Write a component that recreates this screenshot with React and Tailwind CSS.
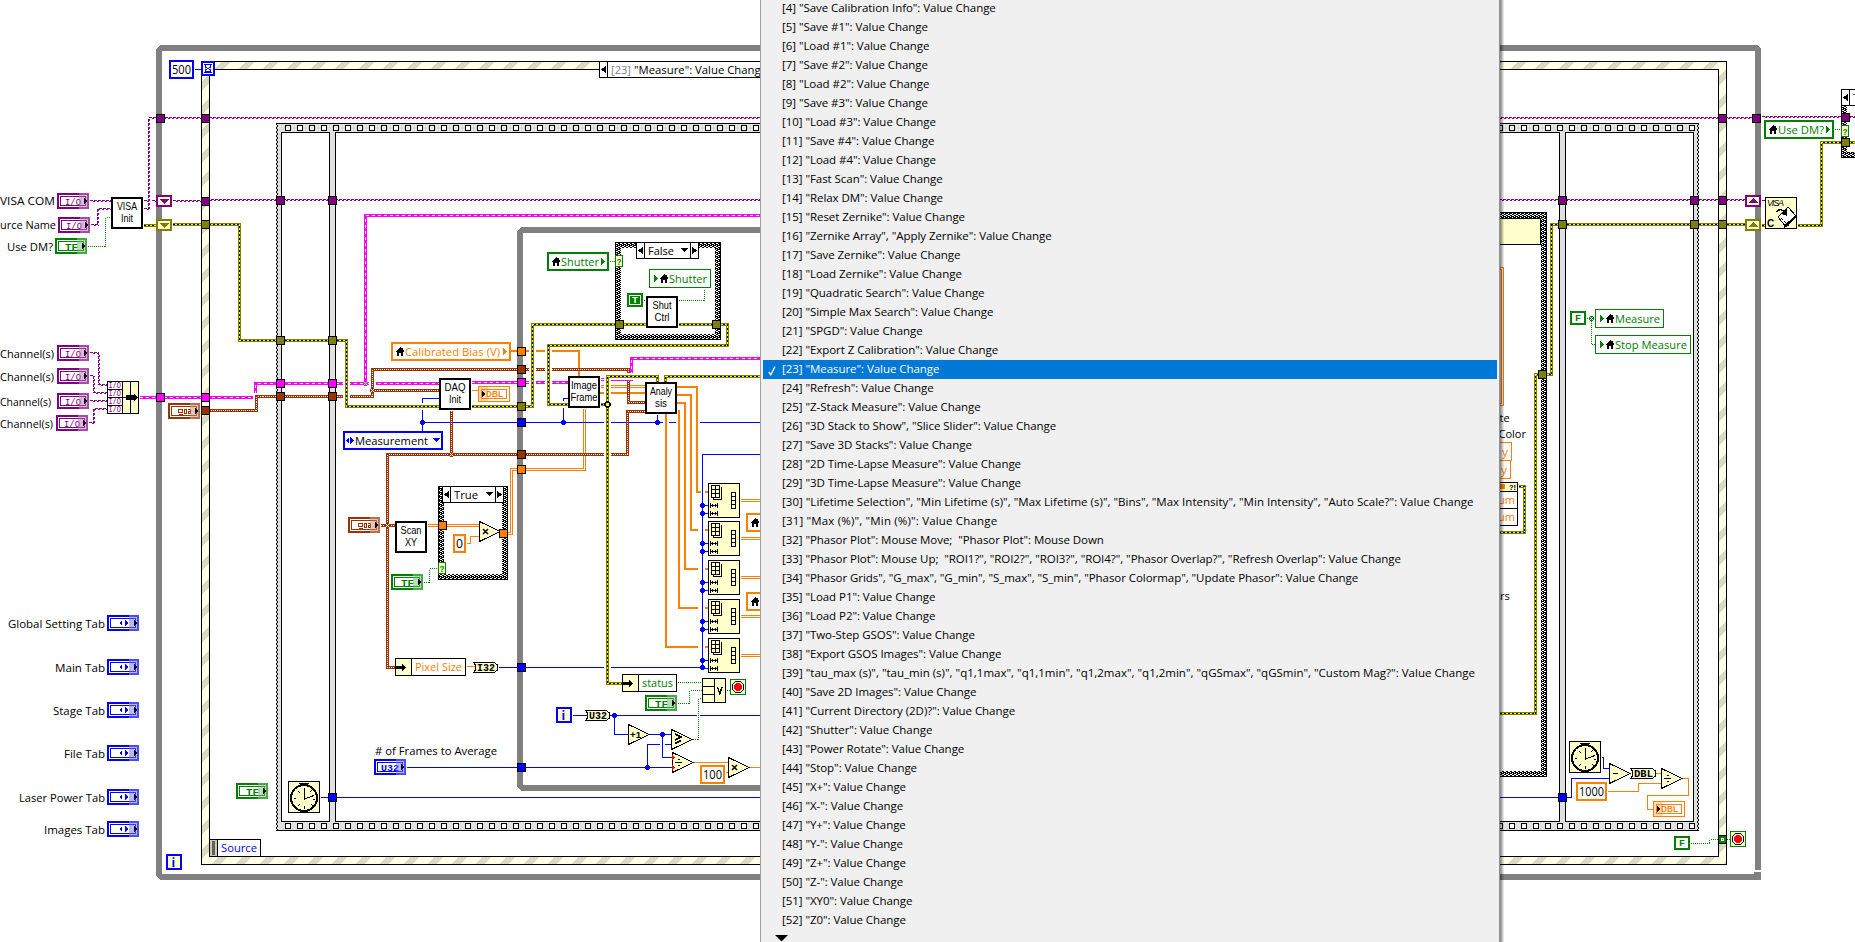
import React from "react";

const PURPLE = "#800080";
const OLIVE = "#808000";
const PINK = "#ff00ff";
const BROWN = "#993300";
const ORANGE = "#ff8000";
const BLUE = "#0000ff";
const GREEN = "#008000";
const CREAM = "#ffffcc";

const UI = "'Open Sans','Noto Sans',sans-serif";
const ICON = "'Liberation Sans',Arial,sans-serif";
const MONO = "'Liberation Mono','Courier New',monospace";

/* ---------- menu ---------- */

const events = [
  '"Save Calibration Info": Value Change',
  '"Save #1": Value Change',
  '"Load #1": Value Change',
  '"Save #2": Value Change',
  '"Load #2": Value Change',
  '"Save #3": Value Change',
  '"Load #3": Value Change',
  '"Save #4": Value Change',
  '"Load #4": Value Change',
  '"Fast Scan": Value Change',
  '"Relax DM": Value Change',
  '"Reset Zernike": Value Change',
  '"Zernike Array", "Apply Zernike": Value Change',
  '"Save Zernike": Value Change',
  '"Load Zernike": Value Change',
  '"Quadratic Search": Value Change',
  '"Simple Max Search": Value Change',
  '"SPGD": Value Change',
  '"Export Z Calibration": Value Change',
  '"Measure": Value Change',
  '"Refresh": Value Change',
  '"Z-Stack Measure": Value Change',
  '"3D Stack to Show", "Slice Slider": Value Change',
  '"Save 3D Stacks": Value Change',
  '"2D Time-Lapse Measure": Value Change',
  '"3D Time-Lapse Measure": Value Change',
  '"Lifetime Selection", "Min Lifetime (s)", "Max Lifetime (s)", "Bins", "Max Intensity", "Min Intensity", "Auto Scale?": Value Change',
  '"Max (%)", "Min (%)": Value Change',
  '"Phasor Plot": Mouse Move;  "Phasor Plot": Mouse Down',
  '"Phasor Plot": Mouse Up;  "ROI1?", "ROI2?", "ROI3?", "ROI4?", "Phasor Overlap?", "Refresh Overlap": Value Change',
  '"Phasor Grids", "G_max", "G_min", "S_max", "S_min", "Phasor Colormap", "Update Phasor": Value Change',
  '"Load P1": Value Change',
  '"Load P2": Value Change',
  '"Two-Step GSOS": Value Change',
  '"Export GSOS Images": Value Change',
  '"tau_max (s)", "tau_min (s)", "q1,1max", "q1,1min", "q1,2max", "q1,2min", "qGSmax", "qGSmin", "Custom Mag?": Value Change',
  '"Save 2D Images": Value Change',
  '"Current Directory (2D)?": Value Change',
  '"Shutter": Value Change',
  '"Power Rotate": Value Change',
  '"Stop": Value Change',
  '"X+": Value Change',
  '"X-": Value Change',
  '"Y+": Value Change',
  '"Y-": Value Change',
  '"Z+": Value Change',
  '"Z-": Value Change',
  '"XY0": Value Change',
  '"Z0": Value Change',
];

/* rows rich in brackets and percent signs are set a little looser */
const tracking = {
  26: "tracking-[0.02px]",
  27: "tracking-[0.17px]",
  35: "tracking-[0.01px]",
};

function EventMenu() {
  return (
    <div className="absolute left-[760px] top-0 flex h-[942px] w-[744px]">
      <div className="flex w-[739px] flex-col overflow-hidden border-l border-[#a0a0a0] bg-[#f0f0f0] px-[2px] font-['Open_Sans','Noto_Sans',sans-serif] text-[11.5px] text-black">
        {events.map((label, i) => {
          const active = i === 19;
          return (
            <div
              key={i}
              className={
                "flex h-[19px] shrink-0 items-center whitespace-pre first:-mt-px " +
                (active ? "bg-[#0078d7] text-white" : "")
              }
            >
              <span className="flex w-[19px] shrink-0 justify-center pr-[1px] pt-[2px]">
                {active && (
                  <svg width="8" height="10" viewBox="0 0 8 10" fill="none" stroke="white" strokeWidth="1.3">
                    <path d="M0.8 6 L2.8 8.8 L7 0.6" />
                  </svg>
                )}
              </span>
              <span className={"pb-[2px] leading-[17px] " + (tracking[i] || "tracking-[-0.05px]")}>
                {`[${i + 4}] ${label}`}
              </span>
            </div>
          );
        })}
        <svg className="ml-[12px] mt-[5px] shrink-0" width="13" height="7" viewBox="0 0 13 7">
          <path d="M0 0H13L6.5 6.5Z" fill="black" />
        </svg>
      </div>
      <div className="w-px bg-[#929292]" />
      <div className="w-[4px] bg-gradient-to-r from-black/50 to-black/5" />
    </div>
  );
}

/* ---------- text ---------- */

function T({ x, y, w, c = "black", s = 11.5, f = UI, b, a, children }) {
  return (
    <text
      x={x}
      y={y}
      fill={c}
      fontSize={s}
      fontFamily={f}
      fontWeight={b ? 700 : 400}
      textAnchor={a}
      textLength={w}
      lengthAdjust="spacingAndGlyphs"
    >
      {children}
    </text>
  );
}

/* ---------- wires ---------- */

function Wire({ k, p, halo }) {
  const g = { points: p, fill: "none" };
  const bg = halo && <polyline {...g} stroke="white" strokeWidth={halo} />;
  if (k === "io")
    return (
      <g>
        <polyline {...g} stroke={PURPLE} strokeDasharray="3 1" />
        <polyline {...g} stroke={PURPLE} strokeDasharray="2 2" strokeDashoffset="2" transform="translate(1 1)" />
      </g>
    );
  if (k === "pink")
    return (
      <g>
        {bg}
        <polyline {...g} stroke={PINK} strokeWidth="3" />
        <polyline {...g} stroke="white" strokeDasharray="3 3" />
      </g>
    );
  if (k === "err")
    return (
      <g>
        {bg}
        <polyline {...g} stroke={OLIVE} strokeWidth="3" />
        <polyline {...g} stroke="#ffff00" />
        <polyline {...g} stroke="black" strokeDasharray="2 2" />
      </g>
    );
  if (k === "brown")
    return (
      <g>
        {bg}
        <polyline {...g} stroke={BROWN} strokeWidth="3" />
        <polyline {...g} stroke="white" strokeDasharray="1 1" />
      </g>
    );
  if (k === "dbl2")
    return (
      <g>
        {bg}
        <polyline {...g} stroke={ORANGE} strokeWidth="3" />
        <polyline {...g} stroke="white" />
      </g>
    );
  if (k === "thick")
    return (
      <g transform="translate(-.5 -.5)">
        {bg}
        <polyline {...g} stroke={ORANGE} strokeWidth="2" />
      </g>
    );
  if (k === "bool") return <polyline {...g} stroke={GREEN} strokeDasharray="1 1" />;
  return (
    <g>
      {bg}
      <polyline {...g} stroke={k === "num" ? ORANGE : BLUE} />
    </g>
  );
}

const Dot = ({ x, y, c = BLUE }) => <circle cx={x + 0.5} cy={y + 0.5} r="2.5" fill={c} />;
const Ring = ({ x, y, c }) => (
  <g>
    <circle cx={x + 0.5} cy={y + 0.5} r="2.5" fill={c} />
    <path d={`M${x - 1} ${y - 1}h1v1h-1ZM${x + 1} ${y - 1}h1v1h-1ZM${x} ${y}h1v1h-1ZM${x - 1} ${y + 1}h1v1h-1ZM${x + 1} ${y + 1}h1v1h-1Z`} fill="white" />
  </g>
);

const Tunnel = ({ x, y, c }) => (
  <rect x={x + 0.5} y={y + 0.5} width="8" height="8" fill={c} stroke="black" />
);

/* ---------- nodes ---------- */

function Box({ x, y, w, h, c = "black", t = 1, fill = "white" }) {
  return (
    <rect x={x + t / 2} y={y + t / 2} width={w - t} height={h - t} fill={fill} stroke={c} strokeWidth={t} />
  );
}

function Terminal({ x, y, kind }) {
  const c = { io: PURPLE, tf: GREEN, tab: BLUE, u32: BLUE, cl: BROWN, dbl: ORANGE }[kind];
  const indicator = kind === "dbl";
  return (
    <g transform={`translate(${x} ${y})`}>
      <Box x={0} y={0} w={32} h={16} c={c} t={indicator ? 1 : 2} />
      <Box x={3} y={3} w={26} h={10} c={c} />
      {kind === "io" && <T x={8} y={11.5} w={16} c={c} s={9.5} f={MONO}>I/O</T>}
      {kind === "tf" && <T x={10} y={11.5} w={13} c={c} s={9.5} f={MONO} b>TF</T>}
      {kind === "u32" && <T x={7} y={11.5} w={18} c={c} s={9.5} f={MONO} b>U32</T>}
      {kind === "dbl" && <T x={8} y={11.3} w={17} c={c} s={9.5} f={ICON} b>DBL</T>}
      {kind === "tab" && <path d="M15 5V11L12 8ZM18 5V11L21 8Z" fill={c} />}
      {kind === "cl" && (
        <path d="M10.5 6.5H14.5V9.5H10.5ZM11 11.5H15M16.5 6.5H18.5V10.5H16.5ZM20 6.5H22.5V10.5H20.5V8.5H22" fill="none" stroke={c} />
      )}
      {indicator ? (
        <g>
          <rect x="1" y="1" width="9" height="14" fill={c} opacity=".3" />
          <path d="M4 4.5V11.5L7.5 8Z" fill="black" />
        </g>
      ) : (
        <g>
          <rect x="22" y="0" width="10" height="16" fill="white" opacity=".3" />
          <rect x="22" y="2" width="8" height="12" fill={c} opacity=".28" />
          <path d="M27 5V11L30 8Z" fill="black" />
        </g>
      )}
    </g>
  );
}

function SubVI({ x, y, a, b, wa, wb }) {
  return (
    <g>
      <Box x={x} y={y} w={32} h={32} t={2} />
      <T x={x + 16 - wa / 2} y={y + 13} w={wa} s={10.5} f={ICON}>{a}</T>
      <T x={x + 16 - wb / 2} y={y + 25} w={wb} s={10.5} f={ICON}>{b}</T>
    </g>
  );
}

const Home = ({ x, y }) => (
  <path transform={`translate(${x} ${y})`} d="M4 0L0 4V5H1V9H3V5.5H5V9H7V5H8V4L7 3V1H6V2Z" fill="black" />
);

function Var({ x, y, w, h = 19, c, label, tx, tw, read }) {
  return (
    <g>
      <Box x={x} y={y} w={w} h={h} c={c} t={read ? 2 : 1} />
      <Home x={read ? x + 5 : x + 11} y={y + 5} />
      {read ? (
        <path d={`M${x + w - 8} ${y + 5.5}v8l4 -4Z`} fill={c} />
      ) : (
        <path d={`M${x + 5} ${y + 5.5}v8l4 -4Z`} fill={c} />
      )}
      {label && <T x={tx} y={y + 14} w={tw} c={c}>{label}</T>}
    </g>
  );
}

function Const({ x, y, w, h = 19, c, label, tx, tw }) {
  return (
    <g>
      <Box x={x} y={y} w={w} h={h} c={c} t={2} />
      <T x={tx} y={y + 14} w={tw} s={12}>{label}</T>
    </g>
  );
}

function BoolConst({ x, y, on }) {
  return (
    <g>
      <Box x={x} y={y} w={16} h={14} c={GREEN} t={2} />
      {on && <rect x={x + 3} y={y + 3} width="10" height="8" fill={GREEN} />}
      <T x={x + 5} y={y + 10} w={6} s={9} f={MONO} b c={on ? "white" : GREEN}>{on ? "T" : "F"}</T>
    </g>
  );
}

function Tri({ x, y, children }) {
  return (
    <g>
      <path d={`M${x + 0.5} ${y + 0.5}L${x + 21} ${y + 10.5}L${x + 0.5} ${y + 20.5}Z`} fill={CREAM} stroke="black" />
      {children}
    </g>
  );
}

const Times = ({ x, y }) => (
  <path d={`M${x + 5} ${y + 8}l5 5m0 -5l-5 5`} stroke="black" strokeWidth="1.5" shapeRendering="auto" />
);
const Divide = ({ x, y }) => (
  <path d={`M${x + 3} ${y + 10.5}h7M${x + 5.5} ${y + 7.5}h2M${x + 5.5} ${y + 13.5}h2`} stroke="black" strokeWidth="1.6" />
);

function Bullet({ x, y, w, label }) {
  return (
    <g>
      <path
        d={`M${x + 0.5} ${y + 0.5}H${x + w - 4}L${x + w - 0.5} ${y + 3}V${y + 8}L${x + w - 4} ${y + 10.5}H${x + 0.5}L${x + 2.5} ${y + 8}V${y + 3}Z`}
        fill={CREAM}
        stroke="black"
      />
      <T x={x + 4} y={y + 9.2} w={w - 7} s={10} f={MONO} b>{label}</T>
    </g>
  );
}

function Selector({ x, y, w, label, tw, dx }) {
  return (
    <g>
      <Box x={x} y={y} w={w} h={17} />
      <path d={`M${x + 8.5} ${y}v17M${x + w - 8.5} ${y}v17`} stroke="black" />
      <path d={`M${x + 7} ${y + 5}v7l-5 -3.5ZM${x + w - 7} ${y + 5}v7l5 -3.5Z`} fill="black" />
      <path d={`M${dx} ${y + 6}h7l-3.5 4Z`} fill="black" />
      <T x={x + 12} y={y + 13} w={tw}>{label}</T>
    </g>
  );
}

const Question = ({ x, y }) => (
  <g>
    <Box x={x} y={y} w={8} h={12} c={GREEN} fill={CREAM} />
    <T x={x + 1.6} y={y + 9.5} s={9} w={5} c={GREEN} f={ICON} b>?</T>
  </g>
);

function Checker({ x, y, w, h }) {
  return (
    <g>
      <path d={`M${x} ${y}h${w}v${h}h${-w}ZM${x + 6} ${y + 6}v${h - 12}h${w - 12}v${-(h - 12)}Z`} fill="url(#checker)" fillRule="evenodd" />
      <Box x={x} y={y} w={w} h={h} fill="none" />
    </g>
  );
}

function Clock({ x, y }) {
  return (
    <g transform={`translate(${x} ${y})`}>
      <Box x={0} y={0} w={32} h={32} fill={CREAM} />
      <circle cx="16" cy="17" r="13" fill="none" stroke="black" strokeWidth="2" />
      <path d="M11 2.5H21M13 4H19" stroke="black" strokeWidth="1.4" />
      <path
        d="M16.5 7V18L26 14.5M16.5 25V28M6 17.5H8M25 18.5H27M10 10L12 12M22 11L24 9M10 25L12 23M23 23L25 25"
        stroke="black"
        fill="none"
      />
    </g>
  );
}

function Stop({ x, y }) {
  return (
    <g transform={`translate(${x} ${y})`}>
      <Box x={0} y={0} w={16} h={16} c={GREEN} fill={CREAM} />
      <path d="M5.5 2.5H10.5L13.5 5.5V10.5L10.5 13.5H5.5L2.5 10.5V5.5Z" fill="white" stroke="black" />
      <circle cx="8" cy="8" r="4" fill="red" />
    </g>
  );
}

function IndexArray({ y }) {
  return (
    <g transform={`translate(708 ${y})`}>
      <Box x={0} y={0} w={32} h={35} fill={CREAM} />
      <path d="M3.5 2.5H11.5V14.5H3.5ZM3.5 6.5H11.5M3.5 10.5H11.5M7.5 2.5V14.5M12.5 4.5H13.5V16.5H5.5V14.5" fill="none" stroke="black" />
      <path d="M23.5 9.5H27.5V25.5H23.5ZM23.5 13.5H27.5M23.5 17.5H27.5M23.5 21.5H27.5" fill="none" stroke="black" />
      <path d="M2.5 20V25M2.5 22.5H9M9.5 20V25M4.5 21V24M7.5 21V24M2.5 28V33M2.5 30.5H9M9.5 28V33M4.5 29V32M7.5 29V32" stroke="black" />
    </g>
  );
}

function ShiftRegister({ x, y, c, up }) {
  return (
    <g>
      <Box x={x} y={y} w={16} h={12} c={c} t={2} fill={CREAM} />
      <path d={up ? `M${x + 3} ${y + 8}h10l-5 -5Z` : `M${x + 3} ${y + 4}h10l-5 5Z`} fill={c} />
    </g>
  );
}

const indexRows = [483, 521, 560, 599, 638];

function Structures() {
  return (
    <g>
      {/* outer while loop */}
      <path
        d="M160 45H1757L1761 49V870H1755V51H162V874H1754V872H1761V880H160L156 876V49Z"
        fill="#808080"
      />
      {/* event structure */}
      <path d="M201 61H1727V865H201ZM210 70V856H1718V70Z" fill="url(#stripes)" fillRule="evenodd" />
      <Box x={201} y={61} w={1526} h={804} fill="none" />
      <Box x={209} y={69} w={1510} h={788} fill="none" />
      {/* film strip sequence */}
      <rect x="276" y="123" width="1423" height="708" fill="#e0e0e0" />
      <rect x="282" y="133" width="47" height="688" fill="white" />
      <rect x="336" y="133" width="1223" height="688" fill="white" />
      <rect x="1566" y="133" width="127" height="688" fill="white" />
      <path d="M276 123.5H1699M276 830.5H1699" stroke="black" />
      <Box x={281} y={132} w={49} h={690} fill="none" />
      <Box x={335} y={132} w={1225} h={690} fill="none" />
      <Box x={1565} y={132} w={129} h={690} fill="none" />
      <path d="M276.5 123V831M1698.5 123V831" stroke="black" strokeDasharray="2 2" />
      <path d="M277.5 123V831M1697.5 123V831" stroke="black" strokeDasharray="2 2" strokeDashoffset="2" />
      <rect x="285" y="125" width="1410" height="6" fill="url(#perf)" />
      <rect x="285" y="823" width="1410" height="6" fill="url(#perf2)" />
      {/* inner while loop */}
      <path d="M521 227H800V233H523V785H800V791H521L517 787V231Z" fill="#808080" />
      {/* case structures */}
      <Checker x={615} y={242} w={106} h={98} />
      <Checker x={438} y={486} w={70} h={94} />
      <Checker x={1400} y={212} w={147} h={565} />
      <Checker x={1841} y={89} w={40} h={69} />
      <Box x={1400} y={218} w={141} h={27} fill={CREAM} />
    </g>
  );
}

function Wires() {
  return (
    <g transform="translate(.5 .5)">
      {/* I/O */}
      <Wire k="io" p="89,200 111,200" />
      <Wire k="io" p="90,224 97,224 97,208 111,208" />
      <Wire k="io" p="143,200 147,200" />
      <Wire k="io" p="151,200 156,200" />
      <Wire k="io" p="143,208 148,208 148,117 1752,117" />
      <Wire k="io" p="1761,116 1855,116" />
      <Wire k="io" p="172,200 206,200" />
      <Wire k="io" p="206,199 1745,199" />
      <Wire k="io" p="1761,200 1765,200" />
      <Wire k="io" p="89,352 98,352 98,384 107,384" />
      <Wire k="io" p="89,375 93,375 93,392 107,392" />
      <Wire k="io" p="89,400 107,400" />
      <Wire k="io" p="88,422 93,422 93,408 107,408" />

      {/* orange arrays and scalars */}
      <Wire k="thick" p="511,351 578.5,351 578.5,376" />
      <Wire k="dbl2" p="600,386 645,386" />
      <Wire k="thick" p="600,392.5 645,392.5" />
      <Wire k="dbl2" p="507,533 511,533 511,469 584,469 584,408" />
      <Wire k="dbl2" p="427,525 479,525" />
      <Wire k="num" p="466,543 470,543 470,536 479,536" />
      <Wire k="num" p="471,390 478,390" />
      <Wire k="num" p="466,666 474,666" />
      <Wire k="num" p="693,762 728,762" />
      <Wire k="num" p="725,772 728,772" />
      <Wire k="num" p="749,767 765,767" />

      {/* booleans */}
      <Wire k="bool" p="87,246 105,246 105,217 111,217" />
      <Wire k="bool" p="609,261 615,261" />
      <Wire k="bool" p="643,300 646,300" />
      <Wire k="bool" p="678,300 704,300 704,288" />
      <Wire k="bool" p="423,582 429,582 429,568 438,568" />
      <Wire k="bool" p="677,682 702,682" />
      <Wire k="bool" p="677,703 689,703 689,690 702,690" />
      <Wire k="bool" p="726,690 730,690" />
      <Wire k="bool" p="1586,318 1595,318" />
      <Wire k="bool" p="1591,318 1591,344 1595,344" />
      <Wire k="bool" p="1690,843 1709,843 1709,839 1730,839" />
      <Wire k="bool" p="1834,129 1841,129" />

      {/* blue */}
      <Wire p="194,69 201,69" />
      <Wire p="320,797 1571,797 1571,778 1609,778" />
      <Wire p="406,767 672,767" />
      <Wire p="439,398 422,398 422,431" />
      <Wire p="422,422 765,422" />
      <Wire p="563,422 563,398 568,398" />
      <Wire p="657,422 657,414" />
      <Wire p="765,454 702,454 702,667 498,667" />
      <Wire p="572,715 765,715" />
      <Wire p="614,715 614,734 671,734" />
      <Wire p="647,767 647,744 671,744" />
      <Wire halo="5" p="662,736 662,757 672,757" />
      <Wire p="662,734 662,737" />
      <Wire p="1601,757 1603,757 1603,768 1609,768" />
      <polyline points="698,712 698,719" stroke="white" strokeWidth="3" />
      <Wire k="bool" p="692,739 698,739 698,698 702,698" />

      {/* brown clusters */}
      <Wire k="brown" p="200,410 256,410 256,396 372,396 372,369 628,369 628,402 645,402" />
      <Wire k="brown" p="372,390 439,390" />
      <Wire k="brown" p="451,410 451,454" />
      <Wire k="brown" p="395,667 387,667 387,454 627,454 627,411 645,411" />
      <Wire k="brown" p="380,525 395,525" />

      {/* pink dynamic data */}
      <Wire k="pink" p="139,397 255,397 255,383 439,383" />
      <Wire k="pink" p="365,383 365,215 765,215" />
      <Wire k="pink" p="471,382 568,382" />
      <Wire k="pink" p="600,379 631,379 631,358 765,358" />
      <Wire k="brown" halo="7" p="256,401 256,396 262,396" />
      <Wire k="brown" halo="7" p="372,386 372,374" />

      {/* error wires */}
      <Wire k="err" p="143,225 156,225" />
      <Wire k="err" halo="7" p="172,224 239,224 239,340 346,340 346,406 439,406" />
      <Wire k="err" halo="7" p="471,406 532,406 532,324 646,324" />
      <Wire k="err" halo="7" p="678,324 727,324 727,345 548,345 548,404 568,404" />
      <Wire k="err" halo="7" p="657,382 657,376 607,376 607,683 622,683" />
      <Wire k="err" p="600,404 607,404" />
      <Wire k="err" p="665,382 665,376 765,376" />
      <Wire k="err" p="1495,713 1535,713 1535,374 1551,374 1551,224 1745,224" />
      <Wire k="err" p="1761,225 1765,225" />
      <Wire k="err" p="1797,225 1821,225 1821,142 1855,142" />
      <Wire k="err" p="1518,486 1524,486 1524,532 1495,532" />

      {/* wires feeding the index array column */}
      <Wire k="thick" halo="6" p="665.5,414 665.5,647 698,647" />
      <Wire k="thick" halo="6" p="678.5,410 678.5,608 698,608" />
      <Wire k="thick" halo="6" p="677,402.5 684.5,402.5 684.5,569 698,569" />
      <Wire k="thick" halo="6" p="677,394.5 690.5,394.5 690.5,530 698,530" />
      <Wire k="thick" halo="6" p="677,386.5 696.5,386.5 696.5,492 701,492" />
      <Wire p="702,454 702,667" />
      {indexRows.map((y, i) => (
        <g key={y}>
          <Wire k="thick" p={`705,${[492, 530, 569, 608, 647][i]} 709,${[492, 530, 569, 608, 647][i]}`} />
          <Wire p={`702,${y + 22} 708,${y + 22}`} />
          <Wire p={`702,${y + 30} 708,${y + 30}`} />
          <Wire k="dbl2" p={`740,${y + 17} 765,${y + 17}`} />
        </g>
      ))}

      {/* timing */}
      <Wire k="num" p="1655,773 1661,773" />
      <Wire k="num" p="1607,791 1638,791 1638,783 1661,783" />
      <Wire k="num" p="1682,778 1688,778 1688,795 1647,795 1647,809 1653,809" />
      <Wire k="dbl2" p="1495,268 1502,268 1502,404 1495,404" />
    </g>
  );
}

function Joints() {
  return (
    <g>
      <Dot x={422} y={422} />
      <Dot x={563} y={422} />
      <Dot x={657} y={422} />
      <Dot x={614} y={715} />
      <Dot x={662} y={734} />
      <Dot x={647} y={767} />
      <Dot x={702} y={667} />
      {indexRows.map((y) => (
        <g key={y}>
          <Dot x={702} y={y + 22} />
          {y !== 638 && <Dot x={702} y={y + 30} />}
        </g>
      ))}
      <Ring x={365} y={383} c={PINK} />
      <Ring x={372} y={390} c={BROWN} />
      <Ring x={451} y={454} c={BROWN} />
      <Ring x={387} y={525} c={BROWN} />
      <Ring x={1591} y={318} c={GREEN} />
      <circle cx="607.5" cy="404.5" r="2.5" fill="#ffff00" stroke="black" strokeWidth="1.4" />
      {[
        [156, 114, PURPLE], [201, 114, PURPLE], [276, 196, PURPLE], [328, 196, PURPLE], [201, 197, PURPLE],
        [201, 220, OLIVE], [276, 336, OLIVE], [328, 336, OLIVE],
        [156, 393, PINK], [201, 393, PINK], [276, 379, PINK], [328, 379, PINK],
        [201, 406, BROWN], [276, 392, BROWN], [328, 392, BROWN],
        [328, 793, BLUE], [1558, 793, BLUE],
        [517, 347, ORANGE], [517, 365, BROWN], [517, 378, PINK], [517, 402, OLIVE], [517, 418, BLUE],
        [517, 450, BROWN], [517, 465, ORANGE], [517, 663, BLUE], [517, 763, BLUE],
        [615, 320, OLIVE], [712, 320, OLIVE], [438, 521, ORANGE], [499, 529, ORANGE],
        [1718, 114, PURPLE], [1752, 114, PURPLE], [1841, 113, PURPLE],
        [1558, 196, PURPLE], [1690, 196, PURPLE], [1718, 196, PURPLE],
        [1558, 220, OLIVE], [1690, 220, OLIVE], [1718, 220, OLIVE], [1841, 138, OLIVE], [1538, 370, OLIVE],
        [1718, 835, GREEN],
      ].map(([x, y, c]) => (
        <Tunnel key={`${x}-${y}`} x={x} y={y} c={c} />
      ))}
      <rect x="1721" y="838" width="3" height="3" fill="white" />
      <rect x="1722" y="839" width="1" height="1" fill={GREEN} />
      <ShiftRegister x={156} y={195} c={PURPLE} />
      <ShiftRegister x={156} y={219} c={OLIVE} />
      <ShiftRegister x={1745} y={195} c={PURPLE} up />
      <ShiftRegister x={1745} y={219} c={OLIVE} up />
    </g>
  );
}

function LeftPanel() {
  return (
    <g>
      <T x={0} y={205} w={55}>VISA COM</T>
      <T x={0} y={229} w={56}>urce Name</T>
      <T x={7} y={251} w={46}>Use DM?</T>
      <Terminal x={57} y={193} kind="io" />
      <Terminal x={58} y={217} kind="io" />
      <Terminal x={55} y={238} kind="tf" />
      <SubVI x={111} y={197} a="VISA" b="Init" wa={20} wb={12} />
      {[
        [57, 345, 0, 54], [57, 368, 0, 54], [57, 393, 0, 51], [56, 415, 0, 53],
      ].map(([x, y, tx, w]) => (
        <g key={y}>
          <T x={tx} y={y + 13} w={w}>Channel(s)</T>
          <Terminal x={x} y={y} kind="io" />
        </g>
      ))}
      <Box x={107} y={381} w={32} h={33} fill={CREAM} />
      {[0, 1, 2, 3].map((i) => (
        <g key={i}>
          <Box x={107} y={381 + i * 8} w={16} h={9} />
          <T x={108.5} y={388.3 + i * 8} w={12.5} s={8.5} f={MONO} c={PURPLE}>I/O</T>
        </g>
      ))}
      <path d="M130.500 381V414M122 397.500H136" stroke="black" />
      <path d="M126 395H134V393L138 397.500L134 401V400H126Z" fill="black" />
      <Terminal x={168} y={403} kind="cl" />
      {[
        ["Global Setting Tab", 615, 8, 97], ["Main Tab", 659, 55, 50], ["Stage Tab", 702, 53, 52],
        ["File Tab", 745, 64, 41], ["Laser Power Tab", 789, 19, 86], ["Images Tab", 821, 44, 61],
      ].map(([l, y, x, w]) => (
        <g key={l}>
          <T x={x} y={y + 13} w={w}>{l}</T>
          <Terminal x={107} y={y} kind="tab" />
        </g>
      ))}
      <Const x={169} y={60} w={25} c={BLUE} label="500" tx={172} tw={19} />
      <Box x={201} y={61} w={14} h={15} c={BLUE} t={2} />
      <path d="M204 64.500H212M204 72.500H212M205.500 65V67L210.500 70V72M210.500 65V67L205.500 70V72M206 71.500H210" fill="none" stroke={BLUE} />
      <Box x={166} y={854} w={16} h={16} c={BLUE} t={2} fill={CREAM} />
      <T x={171.500} y={867} s={12} b c={BLUE}>i</T>
      <Box x={210} y={839} w={51} h={18} />
      <rect x="210" y="840" width="7" height="16" fill="#c8c8b4" />
      <rect x="212" y="841" width="3" height="14" fill="#606060" />
      <path d="M217.500 839V857" stroke="black" />
      <T x={221} y={852} w={36} c={BLUE}>Source</T>
      <Terminal x={236} y={783} kind="tf" />
      <Clock x={288} y={781} />
    </g>
  );
}

function Middle() {
  return (
    <g>
      <Box x={599} y={61} w={200} h={17} />
      <path d="M607.500 61V78" stroke="black" />
      <path d="M606 66V73L601 69.500Z" fill="black" />
      <T x={611} y={74} w={20} c="#808080">[23]</T>
      <T x={634} y={74} w={133}>"Measure": Value Change</T>

      <Var x={547} y={252} w={62} c={GREEN} label="Shutter" tx={561} tw={38} read />
      <Selector x={636} y={242} w={63} label="False" tw={26} dx={681} />
      <Question x={615} y={255} />
      <Var x={649} y={269} w={62} c={GREEN} label="Shutter" tx={669} tw={38} />
      <BoolConst x={627} y={293} on />
      <SubVI x={646} y={296} a="Shut" b="Ctrl" wa={19} wb={15} />

      <Var x={391} y={342} w={120} c={ORANGE} label="Calibrated Bias (V)" tx={405} tw={95} read />
      <SubVI x={439} y={378} a="DAQ" b="Init" wa={21} wb={12} />
      <Terminal x={478} y={386} kind="dbl" />
      <SubVI x={568} y={376} a="Image" b="Frame" wa={26} wb={27} />
      <SubVI x={645} y={382} a="Analy" b="sis" wa={22} wb={12} />
      <Box x={343} y={431} w={100} h={19} c={BLUE} t={2} />
      <path d="M349 437V444L345.500 440.500ZM350 437V444L353.500 440.500Z" fill={BLUE} />
      <T x={355} y={445} w={73}>Measurement</T>
      <path d="M432.500 438H440.500L436.500 442.500Z" fill={BLUE} />

      <Selector x={442} y={486} w={62} label="True" tw={24} dx={486} />
      <Question x={438} y={562} />
      <Terminal x={348} y={517} kind="cl" />
      <SubVI x={395} y={521} a="Scan" b="XY" wa={21} wb={12} />
      <Tri x={479} y={521}><Times x={478} y={521} /></Tri>
      <Const x={453} y={534} w={13} c={ORANGE} label="0" tx={456} tw={7} />
      <Terminal x={391} y={574} kind="tf" />
      <Box x={395} y={658} w={71} h={18} />
      <Box x={395} y={658} w={17} h={18} fill={CREAM} />
      <path d="M395 666H402V663L406 667.500L402 671V669H395Z" fill="black" />
      <T x={415} y={671} w={47} c={ORANGE}>Pixel Size</T>
      <Bullet x={473} y={662} w={25} label="I32" />
      <T x={375} y={755} w={122}># of Frames to Average</T>
      <Terminal x={374} y={759} kind="u32" />

      {indexRows.map((y) => (
        <IndexArray key={y} y={y} />
      ))}
      <Var x={746} y={513} w={60} c={ORANGE} read />
      <Var x={746} y={592} w={60} c={ORANGE} read />

      <Box x={622} y={674} w={55} h={18} />
      <Box x={622} y={674} w={17} h={18} fill={CREAM} />
      <path d="M622 682H629V679L633 683.500L629 687V685H622Z" fill="black" />
      <T x={642} y={687} w={31} c={GREEN}>status</T>
      <Terminal x={645} y={695} kind="tf" />
      <Box x={702} y={678} w={24} h={25} fill={CREAM} />
      <path d="M714.500 678V703M702 686.500H714M702 694.500H714" stroke="black" />
      <path d="M717.500 687L719.800 693.500L722 687" fill="none" stroke="black" strokeWidth="1.4" />
      <Stop x={730} y={679} />

      <Box x={556} y={707} w={16} h={16} c={BLUE} t={2} fill={CREAM} />
      <T x={561.500} y={720} s={12} b c={BLUE}>i</T>
      <Bullet x={585} y={710} w={25} label="U32" />
      <Tri x={628} y={724}><T x={630} y={738} w={11} s={9} b f={ICON}>+1</T></Tri>
      <Tri x={671} y={729}>
        <path d="M675 734L681 737L675 740M681 740.500L675 743.500" fill="none" stroke="black" strokeWidth="1.4" />
      </Tri>
      <Tri x={672} y={752}><Divide x={672} y={752} /></Tri>
      <path d="M672 754L675 757.500L672 760ZM672 764L675 767.500L672 770Z" fill="red" />
      <Const x={700} y={765} w={25} c={ORANGE} label="100" tx={703} tw={19} />
      <Tri x={728} y={757}><Times x={727} y={757} /></Tri>
    </g>
  );
}

function RightPanel() {
  return (
    <g>
      <T x={1499.5} y={422} w={10}>te</T>
      <T x={1498.5} y={438} w={27.5}>Color</T>
      <Box x={1450} y={442} w={62} h={19} c={ORANGE} />
      <Box x={1450} y={460} w={61} h={19} c={ORANGE} />
      <T x={1502} y={456} w={6} c={ORANGE}>y</T>
      <T x={1501} y={474} w={6} c={ORANGE}>y</T>
      <Box x={1450} y={482} w={68} h={44} />
      <Box x={1450} y={482} w={68} h={10} fill={CREAM} />
      <rect x="1498" y="484" width="7" height="5" fill={ORANGE} />
      <T x={1509} y={490} w={7} s={8} b f={ICON}>?!</T>
      <path d="M1450 508.500H1518" stroke="black" />
      <T x={1498} y={504} w={17} c={ORANGE}>um</T>
      <T x={1498} y={521} w={17} c={ORANGE}>um</T>
      <T x={1500} y={600} w={10}>rs</T>

      <BoolConst x={1570} y={311} />
      <Var x={1595} y={309} w={69} c={GREEN} label="Measure" tx={1615} tw={45} />
      <Var x={1595} y={335} w={96} c={GREEN} label="Stop Measure" tx={1615} tw={72} />

      <Clock x={1569} y={741} />
      <Tri x={1609} y={763}><path d="M1613 773.500h5" stroke="black" /></Tri>
      <Bullet x={1630} y={768} w={26} label="DBL" />
      <Tri x={1661} y={768}><Divide x={1661} y={768} /></Tri>
      <Const x={1576} y={782} w={31} c={ORANGE} label="1000" tx={1579} tw={25} />
      <Terminal x={1653} y={801} kind="dbl" />
      <BoolConst x={1674} y={836} />
      <Stop x={1730} y={831} />

      <Box x={1765} y={197} w={32} h={32} fill={CREAM} />
      <text x="1767" y="206" fontSize="9" fontFamily={ICON} fontStyle="italic" textLength="17">VISA</text>
      <T x={1767} y={227} s={10} b f={ICON}>C</T>
      <path d="M1778 217L1788 207L1796 216L1786 227Z" fill="white" stroke="black" />
      <path d="M1784 227L1796 216" stroke="black" strokeWidth="2" />
      <path d="M1781 218L1789 226" stroke="black" strokeDasharray="1 1" />
      <path d="M1776 212Q1781 207 1786 213" fill="none" stroke="black" strokeWidth="1.5" />
      <path d="M1787 209V216L1781 214Z" fill="black" />

      <Var x={1764} y={120} w={70} c={GREEN} label="Use DM?" tx={1778} tw={46} read />
      <Box x={1841} y={89} w={30} h={17} />
      <path d="M1849.500 89V106" stroke="black" />
      <path d="M1848 94V101L1843 97.500Z" fill="black" />
      <T x={1853} y={102}>T</T>
      <Question x={1841} y={125} />
    </g>
  );
}

export default function App() {
  return (
    <main className="relative h-[942px] w-[1855px] overflow-hidden bg-white">
      <svg className="block" width="1855" height="942" viewBox="0 0 1855 942" shapeRendering="crispEdges">
        <defs>
          <pattern id="stripes" width="24" height="24" patternUnits="userSpaceOnUse">
            <rect width="24" height="24" fill="#ffffe6" />
            <path d="M0 19L19 0H24V4L4 24H0ZM0 0H4L0 4ZM19 24L24 19V24Z" fill="#d9d9c6" />
          </pattern>
          <pattern id="checker" width="4" height="4" patternUnits="userSpaceOnUse">
            <rect width="4" height="4" fill="white" />
            <path d="M0 0h2v1h-2ZM2 1h2v1h-2ZM1 1h1v1h-1ZM0 2h2v1h-2ZM2 3h2v1h-2ZM3 0h1v1h-1Z" fill="black" />
          </pattern>
          <pattern id="perf" x="285" y="125" width="12" height="6" patternUnits="userSpaceOnUse">
            <rect x=".5" y=".5" width="5" height="5" fill="white" stroke="black" />
          </pattern>
          <pattern id="perf2" x="285" y="823" width="12" height="6" patternUnits="userSpaceOnUse">
            <rect x=".5" y=".5" width="5" height="5" fill="white" stroke="black" />
          </pattern>
        </defs>
        <Structures />
        <Wires />
        <LeftPanel />
        <Middle />
        <RightPanel />
        <Joints />
      </svg>
      <EventMenu />
    </main>
  );
}
